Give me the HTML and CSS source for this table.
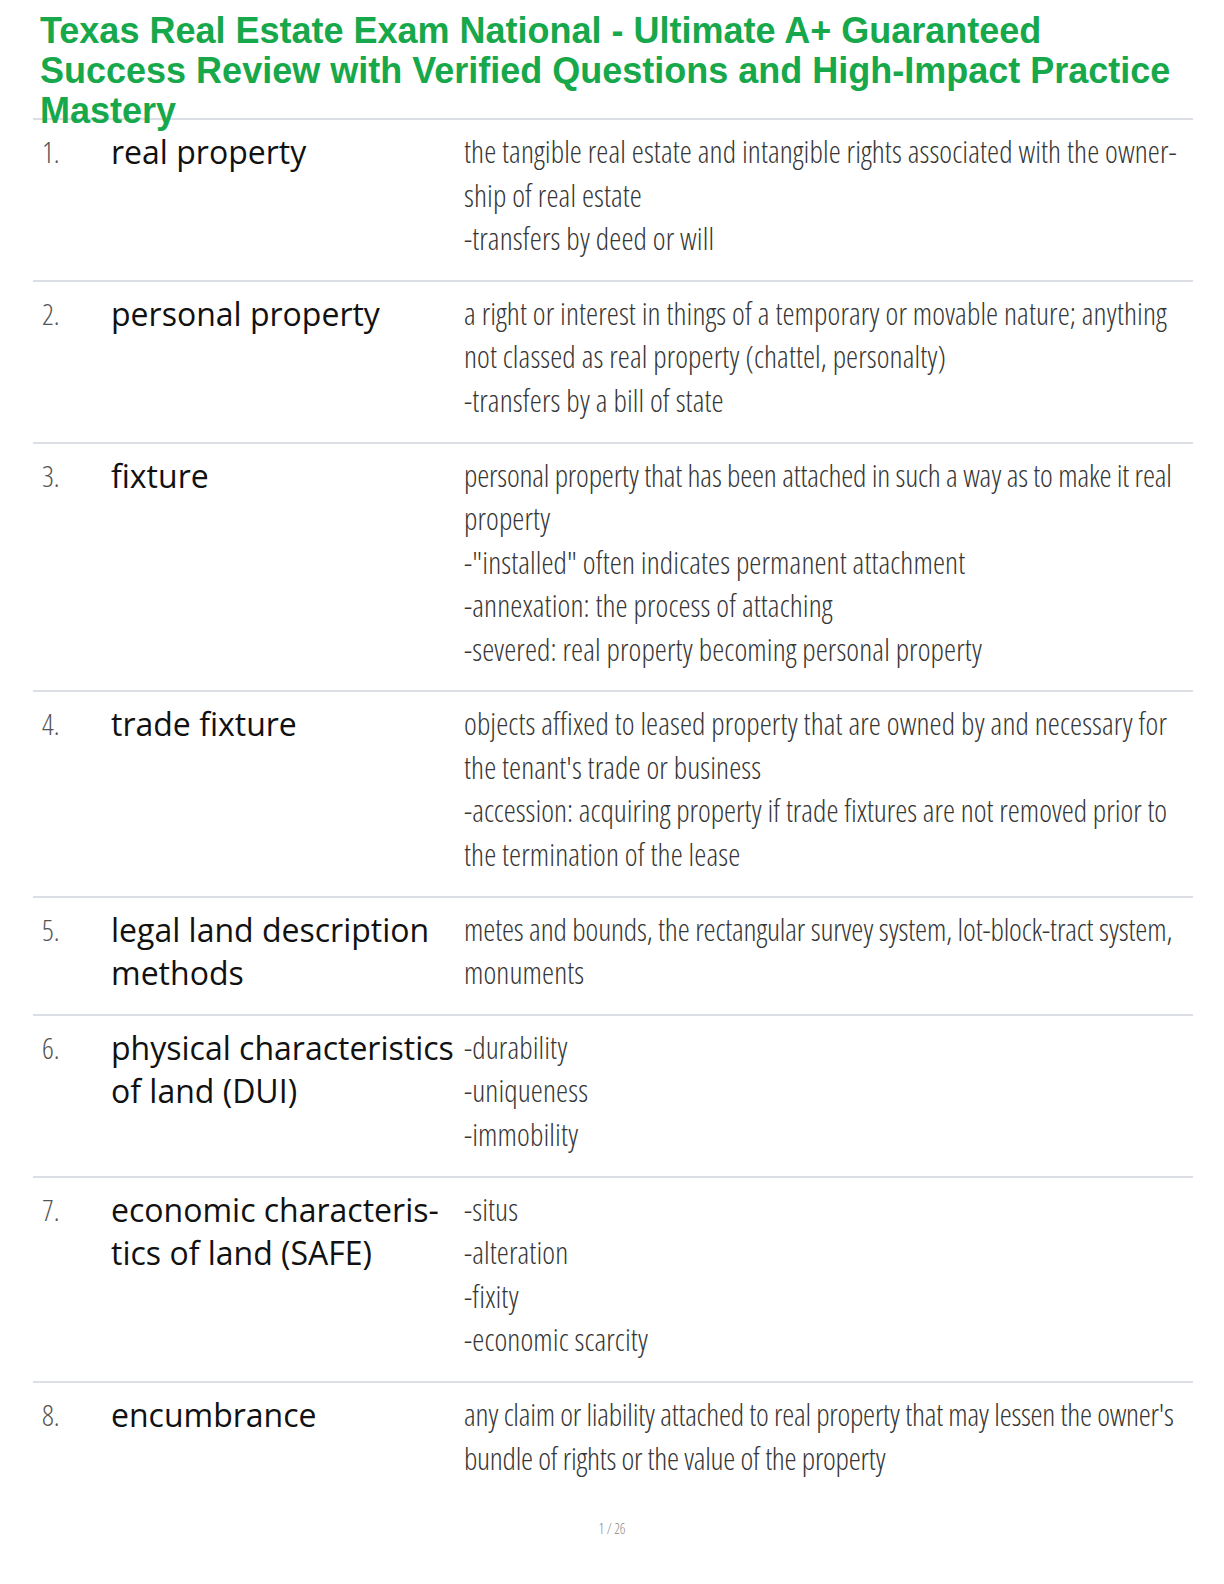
FILE: index.html
```html
<!DOCTYPE html>
<html lang="en">
<head>
<meta charset="utf-8">
<title>Texas Real Estate Exam National</title>
<link rel="stylesheet" href="styles.css">
</head>
<body>
<h1 class="title">Texas Real Estate Exam National - Ultimate A+ Guaranteed<br>Success Review with Verified Questions and High-Impact Practice<br>Mastery</h1>
<div class="cards">
  <div class="row">
    <div class="num">1.</div>
    <div class="term">real property</div>
    <div class="def">the tangible real estate and intangible rights associated with the owner-<br>ship of real estate<br>-transfers by deed or will</div>
  </div>
  <div class="row">
    <div class="num">2.</div>
    <div class="term">personal property</div>
    <div class="def">a right or interest in things of a temporary or movable nature; anything<br>not classed as real property (chattel, personalty)<br>-transfers by a bill of state</div>
  </div>
  <div class="row">
    <div class="num">3.</div>
    <div class="term">fixture</div>
    <div class="def"><span class="tight">personal property that has been attached in such a way as to make it real</span><br>property<br>-"installed" often indicates permanent attachment<br>-annexation: the process of attaching<br>-severed: real property becoming personal property</div>
  </div>
  <div class="row">
    <div class="num">4.</div>
    <div class="term">trade fixture</div>
    <div class="def">objects affixed to leased property that are owned by and necessary for<br>the tenant's trade or business<br><span class="snug">-accession: acquiring property if trade fixtures are not removed prior to</span><br>the termination of the lease</div>
  </div>
  <div class="row">
    <div class="num">5.</div>
    <div class="term">legal land description<br>methods</div>
    <div class="def"><span class="tightish">metes and bounds, the rectangular survey system, lot-block-tract system,</span><br>monuments</div>
  </div>
  <div class="row">
    <div class="num">6.</div>
    <div class="term">physical characteristics<br>of land (DUI)</div>
    <div class="def">-durability<br>-uniqueness<br>-immobility</div>
  </div>
  <div class="row">
    <div class="num">7.</div>
    <div class="term">economic characteris-<br>tics of land (SAFE)</div>
    <div class="def">-situs<br>-alteration<br>-fixity<br>-economic scarcity</div>
  </div>
  <div class="row">
    <div class="num">8.</div>
    <div class="term">encumbrance</div>
    <div class="def"><span class="tighter">any claim or liability attached to real property that may lessen the owner's</span><br><span class="tighter">bundle of rights or the value of the property</span></div>
  </div>
</div>
<div class="footer">1 / 26</div>
</body>
</html>
```
FILE: styles.css
```css
html, body {
  margin: 0;
  padding: 0;
  background: #ffffff;
}
body {
  width: 1224px;
  font-family: "Open Sans", "DejaVu Sans", sans-serif;
}
.title {
  margin: 0 0 -13px 0;
  padding: 11px 40px 0 40px;
  font-family: "Liberation Sans", Arial, sans-serif;
  font-weight: 700;
  font-size: 36px;
  line-height: 40px;
  color: #16a84a;
}
.cards {
  margin: 0 31px 0 33px;
}
.row {
  display: grid;
  grid-template-columns: 69px 353px 1fr;
  padding: 10px 0 19.3px 9px;
  border-top: 2px solid #dcdee6;
  line-height: 43.5px;
}
.num {
  font-family: "Open Sans", sans-serif;
  font-weight: 300;
  font-stretch: 75%;
  font-size: 29px;
  color: #555;
}
.term {
  font-family: "Open Sans", sans-serif;
  font-weight: 400;
  font-size: 32px;
  color: #111;
  white-space: nowrap;
}
.def {
  font-family: "Open Sans", sans-serif;
  font-weight: 300;
  font-stretch: 75%;
  font-size: 30.5px;
  letter-spacing: 0.1px;
  color: #363636;
  white-space: nowrap;
}
.snug {
  letter-spacing: 0;
}
.tightish {
  letter-spacing: -0.145px;
}
.tight {
  letter-spacing: -0.2px;
}
.tighter {
  letter-spacing: -0.26px;
}
.footer {
  margin-top: 19.5px;
  text-align: center;
  font-family: "Open Sans", sans-serif;
  font-weight: 300;
  font-stretch: 75%;
  font-size: 14px;
  line-height: 20px;
  color: #888;
}
```
